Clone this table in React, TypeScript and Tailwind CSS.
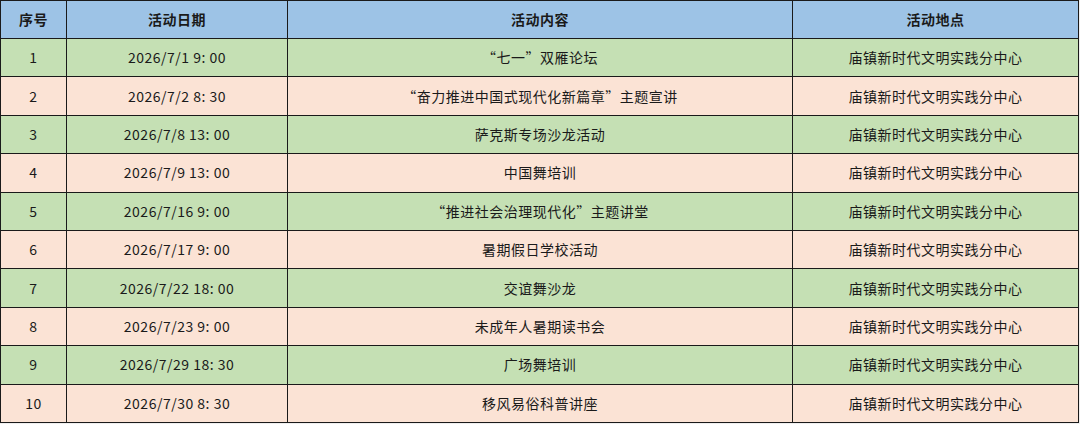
import React from "react";

const rows: [string, string, string][] = [
  ["2026/7/1 9: 00", "“七一”双雁论坛", "庙镇新时代文明实践分中心"],
  ["2026/7/2 8: 30", "“奋力推进中国式现代化新篇章”主题宣讲", "庙镇新时代文明实践分中心"],
  ["2026/7/8 13: 00", "萨克斯专场沙龙活动", "庙镇新时代文明实践分中心"],
  ["2026/7/9 13: 00", "中国舞培训", "庙镇新时代文明实践分中心"],
  ["2026/7/16 9: 00", "“推进社会治理现代化”主题讲堂", "庙镇新时代文明实践分中心"],
  ["2026/7/17 9: 00", "暑期假日学校活动", "庙镇新时代文明实践分中心"],
  ["2026/7/22 18: 00", "交谊舞沙龙", "庙镇新时代文明实践分中心"],
  ["2026/7/23 9: 00", "未成年人暑期读书会", "庙镇新时代文明实践分中心"],
  ["2026/7/29 18: 30", "广场舞培训", "庙镇新时代文明实践分中心"],
  ["2026/7/30 8: 30", "移风易俗科普讲座", "庙镇新时代文明实践分中心"],
];

const font = { fontFamily: '"Noto Sans CJK SC", "Liberation Sans", sans-serif' };

export default function App() {
  return (
    <div className="w-[1080px] h-[424px] bg-[#efefef] overflow-hidden" style={font}>
      <div className="w-[1079px] border-l border-t border-[#1a1a1a] text-[#1a1a1a] text-[14px] tracking-[0.5px]">
        <div className="flex h-[38px] bg-[#9dc3e6] font-bold">
          <div className="w-[66px] flex items-center justify-center border-r border-b border-[#1a1a1a]">序号</div>
          <div className="w-[221px] flex items-center justify-center border-r border-b border-[#1a1a1a]">活动日期</div>
          <div className="w-[505px] flex items-center justify-center border-r border-b border-[#1a1a1a]">活动内容</div>
          <div className="w-[286px] flex items-center justify-center border-r border-b border-[#1a1a1a]">活动地点</div>
        </div>
        {rows.map((r, i) => (
          <div
            key={i}
            className={`flex h-[38.4px] ${i % 2 === 0 ? "bg-[#c5e0b4]" : "bg-[#fbe3d5]"}`}
          >
            <div className="w-[66px] flex items-center justify-center border-r border-b border-[#1a1a1a]">{i + 1}</div>
            <div className="w-[221px] flex items-center justify-center border-r border-b border-[#1a1a1a]">{r[0]}</div>
            <div className="w-[505px] flex items-center justify-center border-r border-b border-[#1a1a1a]">{r[1]}</div>
            <div className="w-[286px] flex items-center justify-center border-r border-b border-[#1a1a1a]">{r[2]}</div>
          </div>
        ))}
      </div>
    </div>
  );
}
